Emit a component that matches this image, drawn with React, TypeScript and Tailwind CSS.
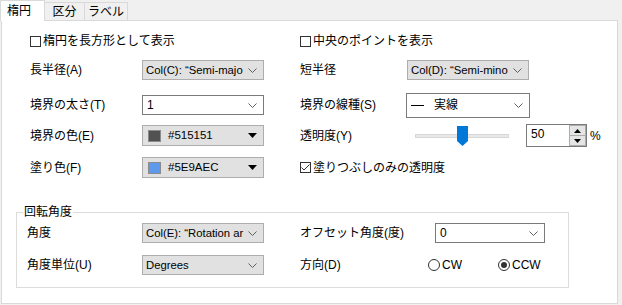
import React from "react";

const FONT = { fontFamily: '"Liberation Sans", "Noto Sans CJK JP", sans-serif' };

function Chevron() {
  return (
    <svg width="9" height="5" viewBox="0 0 9 5" className="shrink-0">
      <polyline points="0.5,0.5 4.5,4.5 8.5,0.5" fill="none" stroke="#606060" strokeWidth="1" />
    </svg>
  );
}

function GraySelect({ text }: { text: string }) {
  return (
    <div className="w-[122px] h-[20px] bg-[#e1e1e1] border border-[#adadad] flex items-center pl-[3px] pr-[6px]">
      <span className="w-[98px] whitespace-nowrap overflow-hidden text-[11.3px] text-black">{text}</span>
      <div className="flex-1" />
      <Chevron />
    </div>
  );
}

function WhiteSelect({ children, w = "w-[122px]", h = "h-[20px]" }: { children: React.ReactNode; w?: string; h?: string }) {
  return (
    <div className={`${w} ${h} bg-white border border-[#7a7a7a] flex items-center justify-between pl-[4px] pr-[6px]`}>
      <div className="flex items-center text-[12px] text-black">{children}</div>
      <Chevron />
    </div>
  );
}

function ColorSelect({ color, label }: { color: string; label: string }) {
  return (
    <div className="w-[122px] h-[21px] bg-[#e1e1e1] border border-[#adadad] flex items-center pl-[5px] pr-[6px]">
      <div className="w-[13px] h-[12px] border border-[#8a8a8a]" style={{ backgroundColor: color }} />
      <span className="ml-[7px] text-[11.5px] text-black flex-1">{label}</span>
      <svg width="9" height="5" viewBox="0 0 9 5">
        <polygon points="0,0 9,0 4.5,5" fill="#000" />
      </svg>
    </div>
  );
}

function Checkbox({ checked }: { checked?: boolean }) {
  return (
    <div className="w-[11px] h-[11px] border border-[#333] bg-white flex items-center justify-center shrink-0">
      {checked && (
        <svg width="9" height="7" viewBox="0 0 9 7">
          <polyline points="0.5,3.5 3,6 8.5,0.5" fill="none" stroke="#333" strokeWidth="1" />
        </svg>
      )}
    </div>
  );
}

function Radio({ checked }: { checked?: boolean }) {
  return (
    <div className="w-[12px] h-[12px] rounded-full border border-[#333] bg-white flex items-center justify-center shrink-0">
      {checked && <div className="w-[6px] h-[6px] rounded-full bg-[#333]" />}
    </div>
  );
}

function Label({ children, w }: { children: React.ReactNode; w: string }) {
  return <div className={`${w} shrink-0 text-[12px] text-black whitespace-nowrap`}>{children}</div>;
}

export default function App() {
  return (
    <div className="w-[622px] h-[305px] bg-[#f0f0f0] overflow-hidden" style={FONT}>
      {/* Tabs */}
      <div className="h-[20px] flex items-end relative z-10">
        <div className="w-[45px] h-[21px] bg-white border border-b-0 border-[#d9d9d9] -mb-[1px] flex items-center pl-[6px] text-[12px] text-black">
          楕円
        </div>
        <div className="w-[40px] h-[18px] bg-[#f0f0f0] border border-l-0 border-b-0 border-[#d9d9d9] flex items-center justify-center text-[12px] text-black">
          区分
        </div>
        <div className="w-[43px] h-[18px] bg-[#f0f0f0] border border-l-0 border-b-0 border-[#d9d9d9] flex items-center justify-center text-[12px] text-black">
          ラベル
        </div>
      </div>

      {/* Panel */}
      <div className="ml-[1px] w-[617px] h-[284px] bg-white border border-[#d9d9d9]">
        <div className="pl-[28px]">
          {/* checkboxes */}
          <div className="mt-[10px] h-[20px] flex items-center">
            <div className="w-[270px] flex items-center gap-[2px] text-[12px]">
              <Checkbox />
              <span>楕円を長方形として表示</span>
            </div>
            <div className="flex items-center gap-[2px] text-[12px]">
              <Checkbox />
              <span>中央のポイントを表示</span>
            </div>
          </div>

          {/* 長半径 / 短半径 */}
          <div className="mt-[9px] h-[20px] flex items-center">
            <Label w="w-[112px]">長半径(A)</Label>
            <GraySelect text={'Col(C): \u201cSemi-majo'} />
            <div className="w-[36px]" />
            <Label w="w-[107px]">短半径</Label>
            <GraySelect text={'Col(D): \u201cSemi-mino'} />
          </div>

          {/* 境界の太さ / 線種 */}
          <div className="mt-[12px] h-[26px] flex items-center">
            <Label w="w-[112px]">境界の太さ(T)</Label>
            <WhiteSelect>1</WhiteSelect>
            <div className="w-[36px]" />
            <Label w="w-[106px]">境界の線種(S)</Label>
            <WhiteSelect w="w-[124px]" h="h-[25px]">
              <span className="w-[13px] h-[1px] bg-black" />
              <span className="ml-[10px]">実線</span>
            </WhiteSelect>
          </div>

          {/* 境界の色 / 透明度 */}
          <div className="mt-[6px] h-[23px] flex items-center">
            <Label w="w-[112px]">境界の色(E)</Label>
            <ColorSelect color="#515151" label="#515151" />
            <div className="w-[36px]" />
            <Label w="w-[115px]">透明度(Y)</Label>
            <div className="relative w-[94px] h-[20px] flex items-center">
              <div className="w-[94px] h-[4px] bg-[#e7eaea] border border-[#d6d6d6]" />
              <svg width="11" height="20" viewBox="0 0 11 20" className="absolute left-[42px] top-0">
                <polygon points="0,0 11,0 11,15 5.5,20 0,15" fill="#0078d7" />
              </svg>
            </div>
            <div className="ml-[17px] w-[61px] h-[23px] border border-[#7a7a7a] bg-white flex">
              <div className="flex-1 pl-[4px] text-[12px] leading-[18px]">50</div>
              <div className="w-[17px] flex flex-col">
                <div className="flex-1 bg-[#e5e5e5] border border-[#adadad] flex items-center justify-center">
                  <svg width="7" height="4" viewBox="0 0 7 4"><polygon points="3.5,0 7,4 0,4" fill="#000" /></svg>
                </div>
                <div className="flex-1 bg-[#e5e5e5] border border-t-0 border-[#adadad] flex items-center justify-center">
                  <svg width="7" height="4" viewBox="0 0 7 4"><polygon points="0,0 7,0 3.5,4" fill="#000" /></svg>
                </div>
              </div>
            </div>
            <span className="ml-[3px] text-[12px]">%</span>
          </div>

          {/* 塗り色 / 塗りつぶし */}
          <div className="mt-[10px] h-[21px] flex items-center">
            <Label w="w-[112px]">塗り色(F)</Label>
            <ColorSelect color="#5E9AEC" label="#5E9AEC" />
            <div className="w-[36px]" />
            <div className="flex items-center gap-[2px] text-[12px]">
              <Checkbox checked />
              <span>塗りつぶしのみの透明度</span>
            </div>
          </div>
        </div>

        {/* 回転角度 group */}
        <div className="relative ml-[14px] mt-[34px] w-[553px] h-[76px] border border-[#dcdcdc]">
          <div className="absolute -top-[8px] left-[6px] bg-white px-[1px] text-[12px] leading-[15px]">回転角度</div>
          <div className="pl-[10px]">
            <div className="mt-[10px] h-[20px] flex items-center">
              <Label w="w-[115px]">角度</Label>
              <GraySelect text={'Col(E): \u201cRotation ar'} />
              <div className="w-[36px]" />
              <Label w="w-[135px]">オフセット角度(度)</Label>
              <WhiteSelect w="w-[110px]">0</WhiteSelect>
            </div>
            <div className="mt-[12px] h-[20px] flex items-center">
              <Label w="w-[115px]">角度単位(U)</Label>
              <GraySelect text="Degrees" />
              <div className="w-[36px]" />
              <Label w="w-[128px]">方向(D)</Label>
              <div className="w-[70px] flex items-center gap-[2px] text-[12px]">
                <Radio />
                <span>CW</span>
              </div>
              <div className="flex items-center gap-[2px] text-[12px]">
                <Radio checked />
                <span>CCW</span>
              </div>
            </div>
          </div>
        </div>
      </div>
    </div>
  );
}
